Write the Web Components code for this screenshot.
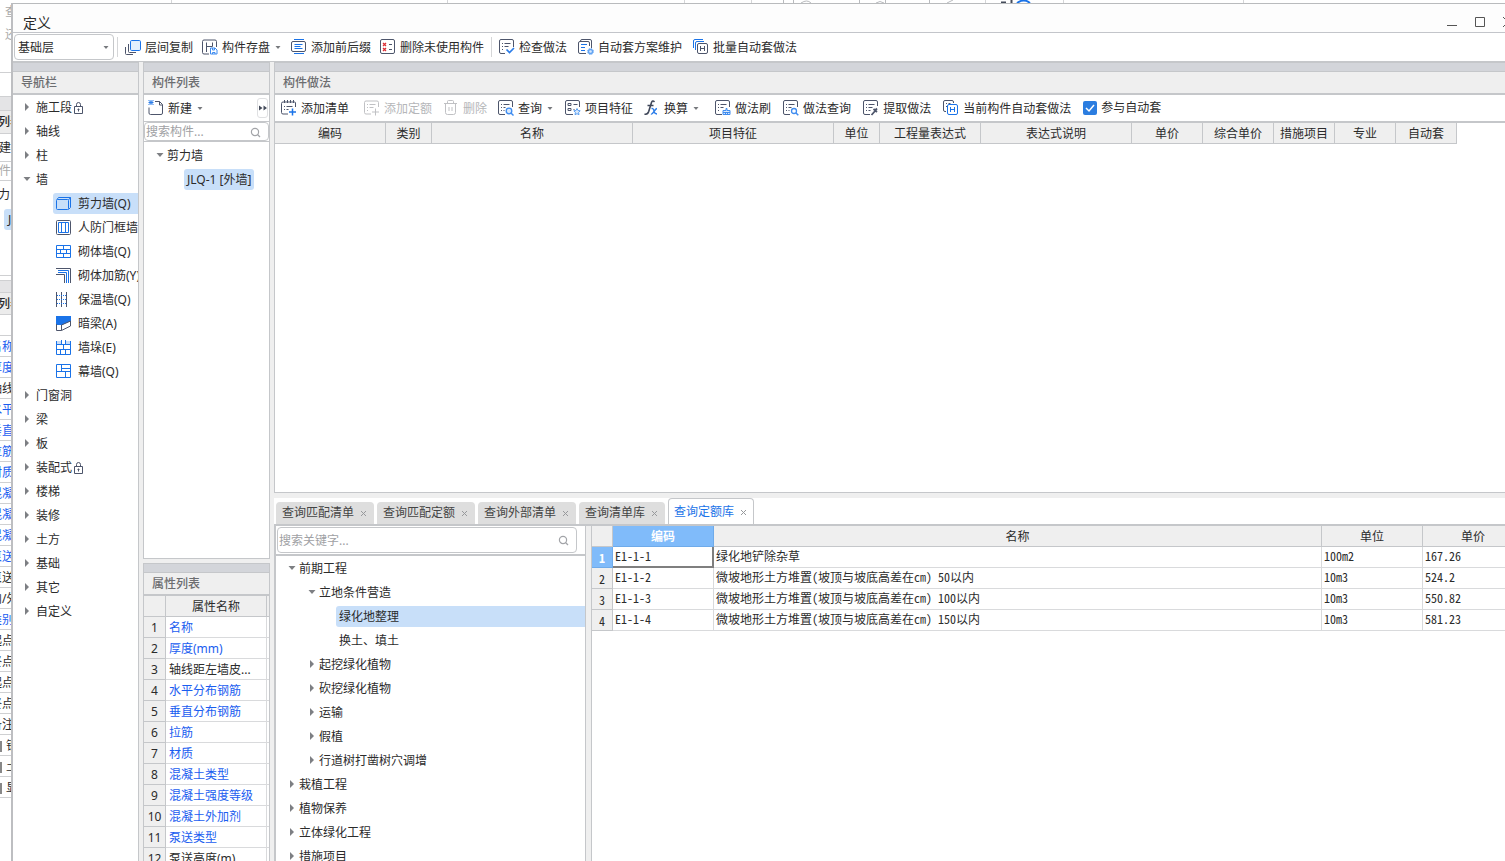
<!DOCTYPE html>
<html lang="zh-CN">
<head>
<meta charset="utf-8">
<title>定义</title>
<style>
  html, body { margin: 0; height: 100%; overflow: hidden; background: #fff; }
  body {
    font: 12px/20px "Noto Sans", "Noto Sans CJK SC", sans-serif;
    color: #2b2b2b;
    --line: #c5c7ca;
    --line-soft: #d9dadc;
    --panel: #efefef;
    --bar: #d3d5da;
    --sel: #c8dff9;
    --ink: #4d556b;
    --blue: #1a73e8;
  }
</style>
</head>
<body>
<define-app></define-app>
<script>
const ICONS = {
  copy: '<path class="k" d="M3.500 5v7.500q0 1 1 1H11M.5 8v6.500q0 1 1 1H8"/><rect class="b" x="5.500" y="1.500" width="10" height="10" rx="1.200" style="fill:#e3effd"/>',
  save: '<path class="k" d="M14.500 8V2.500q0-1.500-1.500-1.500H2Q.5 1 .5 2.500v11Q.5 15 2 15h5M4.500 3.500v9.500M4.500 7.500h6M10.500 3.500v4"/><path d="M8.500 9h4.500l2 2v4H8.500z" fill="#fff" stroke="#3f8cf0"/><path d="M10.500 9v2h2V9M10.500 15v-1.500h2.500V15" fill="none" stroke="#3f8cf0"/>',
  affix: '<path class="b" d="M3 .5h10M3 14.500h10M3.500 5.500h8M3.500 7.500h6M3.500 9.500h8"/><rect class="k" x=".5" y="2.500" width="14" height="10" rx="1.500"/>',
  unused: '<rect class="k" x=".5" y=".5" width="14" height="14" rx="1.500"/><path d="M3 4l3 3m0-3l-3 3M3 9l3 3m0-3l-3 3" stroke="#dc2f35" fill="none" stroke-width="1.300"/><path class="k" d="M9 5.500h3M9 10.500h3"/>',
  check: '<path class="k" d="M14.500 8V2q0-1.500-1.500-1.500H2Q.5.500.5 2v11Q.5 14.500 2 14.500h4M3 4.500h1M5.500 4.500h6M3 7.500h1M5.500 7.500h4M3 10.500h1"/><path d="M7.500 10.500l3 3 4.500-4.500" stroke="#2b7de9" fill="none" stroke-width="1.700"/>',
  scheme: '<path class="k" d="M2.500 2.500V2Q2.500.5 4 .5h8Q13.500.5 13.500 2v7M11.500 7V4q0-1.500-1.500-1.500H2Q.5 2.500.5 4v9Q.5 14.500 2 14.500h6"/><path class="b" d="M3 5.500h6M3 8.500h4M3 11.500h4"/><circle cx="12.500" cy="12.500" r="2" fill="#d9e9fc" stroke="#62a4f3" stroke-width="1.300"/><circle cx="12.500" cy="12.500" r="3" fill="none" stroke="#62a4f3" stroke-dasharray="1.300 1.050"/>',
  batch: '<path class="b" d="M.5 9V2Q.5.500 2 .5h8M2.500 11V4Q2.500 2.500 4 2.500h7"/><rect class="k" x="4.500" y="4.500" width="10" height="10" rx="1.500"/><path class="k" d="M7.500 7v5M11.500 7v5M7.500 9.500h4"/>',
  addlist: '<path class="k" d="M14.500 7V3q0-1-1-1H2Q.5 2 .5 3.500v9q0 1.500 1.500 1.500h5M3.500 0v3M6.500 0v3M9.500 0v3M12.500 0v3M3 6.500h1M5.500 6.500h6M3 9.500h1M5.500 9.500h2"/><path class="b" stroke-width="1.500" d="M11.500 8.500v7M8 12h7"/>',
  adddisabled: '<path class="g" d="M14.500 7V2.500q0-1.500-1.500-1.500H2Q.5 1 .5 2.500v10q0 1.500 1.500 1.500h5M3 4.500h1M5.500 4.500h6M3 7.500h1M5.500 7.500h4M3 10.500h1M11.500 8.500v7M8 12h7"/>',
  trash: '<path class="g" d="M1 3.500h13M4.500 3V1.500q0-1 1-1h4q1 0 1 1V3M2.500 4v8.500q0 2 2 2h6q2 0 2-2V4M6 7v4M9 7v4"/>',
  query: '<path class="k" d="M14.500 7V2q0-1.500-1.500-1.500H2Q.5.500.5 2v11Q.5 14.500 2 14.500h5M3 4.500h1M5.500 4.500h6M3 7.500h1M5.500 7.500h2M3 10.500h1M5.500 10.500h1"/><circle cx="11" cy="11" r="2.800" fill="#d9e9fc" stroke="#3f8cf0" stroke-width="1.300"/><path d="M13 13l2.500 2.500" stroke="#3f8cf0" stroke-width="1.500"/>',
  feature: '<path class="k" d="M14.500 7V2q0-1.500-1.500-1.500H2Q.5.500.5 2v11Q.5 14.500 2 14.500h6M3 3.500h3v2H3zM3 8.500h3v2H3zM8.500 4.500h4M8.500 9.500h1"/><path d="M12 8.500l1 2 2.200.3-1.600 1.600.4 2.300-2-1-2 1 .4-2.300-1.600-1.600 2.200-.3z" fill="#d9e9fc" stroke="#5a9ff2"/>',
  fx: '<path d="M10.500 1.800Q8.500 0 7.500 2.500L4.700 11.500Q3.500 15 .5 14M3.500 5.500h6" fill="none" stroke="#3f4658" stroke-width="1.600"/><path d="M7.500 8.500q2-.5 2.500 2.500t3 3M13 8.500q-1 0-3 3t-3 2.500" fill="none" stroke="#2b7de9" stroke-width="1.400"/>',
  brush: '<path class="k" d="M14.500 7V2Q14.500.5 13 .5H2Q.5.500.5 2v11Q.5 14.500 2 14.500h5M3 4.500h1M5.500 4.500h6M3 7.500h1M5.500 7.500h3M3 10.500h1"/><path d="M11 8.500h1v2h3v4H8v-4h3zM8 12.500h7M10.500 12.500v2M12.500 12.500v2" fill="#d9e9fc" stroke="#3f8cf0"/>',
  find: '<path class="k" d="M14.500 7V2Q14.500.5 13 .5H2Q.5.500.5 2v11Q.5 14.500 2 14.500h5M3 4.500h1M5.500 4.500h6M3 7.500h1M5.500 7.500h3M3 10.500h1M5.500 10.500h1"/><circle cx="11" cy="11" r="2.500" fill="#fff" stroke="#3f8cf0" stroke-width="1.300"/><path d="M12.800 12.800l2.500 2.500" stroke="#3f8cf0" stroke-width="1.500"/>',
  extract: '<path class="k" d="M14.500 6V2Q14.500.5 13 .5H2Q.5.500.5 2v11Q.5 14.500 2 14.500h5M3 4.500h1M5.500 4.500h6M3 7.500h1M5.500 7.500h4M3 10.500h1M5.500 10.500h2"/><path d="M8.500 15l4-4.500M10.500 9l3.500 3M12 10.500l2-2" stroke="#4d556b" stroke-width="1.800" fill="none"/>',
  auto: '<path class="k" d="M3 11.500H2Q.5 11.500.5 10V2Q.5.500 2 .5h7q1.500 0 1.500 1.500v1M3 3.500h1M5.500 3.500h2M3 6.500h1"/><rect class="b" x="4.500" y="4.500" width="10" height="10" rx="1.500"/><path class="b" d="M7.500 7v5M11.500 7v5M7.500 9.500h4"/>',
  newdoc: '<path class="k" d="M7 1.500h4.500l3 3v8.500q0 1.500-1.500 1.500H2.500Q1 14.500 1 13V7.500M11.500 1.500v3.500h3"/><path d="M.5 0l5 5m0-5l-5 5M3 0v5M.5 2.500h5" stroke="#2b7de9" fill="none" stroke-width="1"/>',
  shear: '<rect class="b" x=".5" y="3.500" width="12" height="10" rx="1"/><path class="b" d="M1 3.500l1.500-2h12v10l-2 2M12.500 4l2-2.500"/>',
  civil: '<rect class="k" x=".5" y=".5" width="14" height="14" rx="1"/><path class="b" d="M2.500 2.500h10v10h-10zM5.500 2.500v10M9.500 2.500v10"/>',
  brick: '<path class="b" d="M.5 1.500h14v12H.5zM.5 5.500h14M.5 9.500h14M7.500 1.500v4M4.500 5.500v4M10.500 5.500v4M7.500 9.500v4"/>',
  rebar: '<path class="k" d="M0 .5h14.500V15M0 6.500h8.500V15"/><path class="b" d="M2 2.500h10.500V15M2 4.500h8.500V15"/>',
  insul: '<path class="k" d="M.5 0v15M5.500 0v15M10.500 0v15"/><path class="b" stroke-dasharray="1 1" d="M1 3.500h9M1 7.500h9M1 11.500h9"/>',
  hidden: '<path d="M0 0h15v5L6 9H0z" fill="#1a73e8"/><path class="k" d="M.5 8v6.500h5V9M5.500 14.500L14.500 10V5l-9 4"/>',
  pier: '<path d="M1 1h4v3H1zM10 1h4v3h-4z" fill="#c9def9"/><path class="b" d="M.5 1v13.500h14V1M5.500 0v4.500M9.500 0v4.500M.5 4.500h14M.5 9.500h14M7.500 4.500v5M4.500 9.500v5M9.500 9.500v5"/>',
  curtain: '<path class="b" d="M.5.500h14v13H.5zM.5 7.500h14M5.500.5v7M9.500 7.500v6M5.500 4.500h9"/>',
  lock: '<path class="k" d="M2.500 6.500h8v7h-8zM4.500 6V4.500q0-2 2-2t2 2V6"/><path class="k" d="M6.500 8.500v3M5.500 9.500h2"/>',
  search: '<circle cx="7" cy="8" r="3.600" fill="none" stroke="#a2a4a8" stroke-width="1.200"/><path d="M9.500 10.500l2.500 2.500" stroke="#a2a4a8" stroke-width="1.200"/>',
  more: '<path d="M4 5.500l3.500 2.500L4 10.500zM8.500 5.500l3.500 2.500-3.500 2.500z" fill="#444b5a"/>',
  min: '<path d="M3 12.500h10" stroke="#555"/>',
  max: '<path d="M3.500 4.500h9v9h-9z" fill="none" stroke="#555"/>',
  close: '<path d="M3 4l10 10M13 4L3 14" stroke="#555"/>',
  drop: '<path d="M5.500 7h5l-2.500 3z" fill="#77797d"/>',
  x: '<path d="M5 6l5 5m0-5l-5 5" stroke="#97999c"/>',
  open: '<path d="M4.500 6h7L8 10z" fill="#7d7f83"/>',
  shut: '<path d="M6 4l4 4-4 4z" fill="#7d7f83"/>'
};

class Base extends HTMLElement {
  connectedCallback() {
    if (this.shadowRoot) return;
    this.attachShadow({ mode: 'open' });
    const t = document.createElement('template');
    t.innerHTML = `<style>*{box-sizing:border-box}${this.css()}</style>${this.html()}`;
    this.shadowRoot.append(t.content.cloneNode(true));
  }
  get(n) { return this.getAttribute(n) || ''; }
}
const def = (name, css, html) => customElements.define(name, class extends Base {
  css() { return css; }
  html() { return typeof html === 'function' ? html(this) : html; }
});
const icon = (n, extra = '') => `<ui-icon name="${n}" ${extra}></ui-icon>`;

def('ui-icon', `
  :host { display: block; flex: none; width: 16px; height: 16px; }
  svg { display: block; }
  .k { fill: none; stroke: #4d556b; } .b { fill: none; stroke: #1a73e8; } .g { fill: none; stroke: #c0c1c4; }`,
  e => `<svg width="16" height="16" viewBox="0 0 16 16" aria-hidden="true">${ICONS[e.get('name')]}</svg>`);

def('tool-button', `
  :host { display: block; flex: none; }
  button { display: flex; align-items: center; gap: 4px; height: 20px; padding: 0; border: 0; background: none; font: inherit; color: inherit; white-space: nowrap; }
  button:disabled { color: #b5b6b9; }
  .label { padding-top: 2px; }
  .drop { width: 8px; overflow: hidden; display: flex; justify-content: center; }`,
  e => `<button type="button" ${e.hasAttribute('disabled') ? 'disabled' : ''}>${icon(e.get('icon'))}<span class="label"><slot></slot></span>${e.hasAttribute('drop') ? `<span class="drop">${icon('drop')}</span>` : ''}</button>`);

def('search-box', `
  :host { display: block; min-width: 0; }
  label { display: flex; align-items: center; height: 100%; border: 1px solid var(--line); border-radius: 4px; background: #fff; padding: 0 4px 0 1px; }
  input { flex: 1; min-width: 0; border: 0; outline: 0; padding: 1px 0 0; background: none; font: inherit; line-height: 16px; color: inherit; }
  input::placeholder { color: #a0a1a4; opacity: 1; }`,
  e => `<label><input type="text" aria-label="搜索" placeholder="${e.get('hint')}">${icon('search')}</label>`);

def('dock-pane', `
  :host { display: flex; flex-direction: column; min-width: 0; min-height: 0; overflow: hidden; background: #fff; border-top: 1px solid var(--line); }
  .grip { flex: none; height: 9px; background: var(--bar); border-bottom: 1px solid var(--line); }
  h2 { flex: none; margin: 0; height: 23px; padding-left: 8px; background: var(--panel); border-bottom: 2px solid var(--line); font-size: 12px; line-height: 22px; font-weight: 500; color: #6c6d70; }
  .body { flex: 1; min-height: 0; display: flex; flex-direction: column; overflow: hidden; }`,
  e => `<div class="grip"></div><h2>${e.get('heading')}</h2><div class="body"><slot></slot></div>`);

def('tree-row', `
  :host { display: flex; flex: none; height: 24px; padding-top: 2px; padding-left: calc(var(--tree-pad) + var(--level) * 20px); }
  .arrow { flex: none; width: 8px; height: 20px; margin-right: var(--tree-gap, 0px); display: flex; justify-content: center; align-items: center; }
  .content { display: flex; align-items: center; gap: 6px; height: 21px; padding: 0 3px; line-height: 21px; white-space: nowrap; border-radius: 3px; }
  :host([lock]) .content { gap: 0; }
  :host([selected]) .content { background: var(--sel); }
  :host([fill]) .content { flex: 1; border-radius: 3px 0 0 3px; }`,
  e => `<span class="arrow">${e.get('state') ? icon(e.get('state')) : ''}</span><span class="content" role="treeitem">${e.get('icon') ? icon(e.get('icon')) : ''}<span><slot></slot></span>${e.hasAttribute('lock') ? icon('lock') : ''}</span>`);

const rows = list => list.map(([label, level, state, extra = '']) =>
  `<tree-row style="--level:${level}" ${state ? `state="${state}"` : ''} ${extra}>${label}</tree-row>`).join('');

def('nav-tree', `
  :host { display: flex; flex-direction: column; flex: 1; overflow: hidden; --tree-pad: 10px; --tree-gap: 2px; }`,
  rows([
    ['施工段', 0, 'shut', 'lock'], ['轴线', 0, 'shut'], ['柱', 0, 'shut'], ['墙', 0, 'open'],
    ['剪力墙(Q)', 1, '', 'icon="shear" selected fill'], ['人防门框墙', 1, '', 'icon="civil"'],
    ['砌体墙(Q)', 1, '', 'icon="brick"'], ['砌体加筋(Y)', 1, '', 'icon="rebar"'],
    ['保温墙(Q)', 1, '', 'icon="insul"'], ['暗梁(A)', 1, '', 'icon="hidden"'],
    ['墙垛(E)', 1, '', 'icon="pier"'], ['幕墙(Q)', 1, '', 'icon="curtain"'],
    ['门窗洞', 0, 'shut'], ['梁', 0, 'shut'], ['板', 0, 'shut'], ['装配式', 0, 'shut', 'lock'],
    ['楼梯', 0, 'shut'], ['装修', 0, 'shut'], ['土方', 0, 'shut'], ['基础', 0, 'shut'],
    ['其它', 0, 'shut'], ['自定义', 0, 'shut']]));

def('component-list', `
  :host { display: flex; flex-direction: column; flex: 1; min-height: 0; }
  .tools { flex: none; display: flex; align-items: center; justify-content: space-between; height: 27px; padding: 0 1px 0 4px; border-bottom: 1px solid var(--line); }
  .more { width: 11px; height: 20px; padding: 0; border: 1px solid #dfe0e2; border-radius: 3px; background: #fff; display: flex; align-items: center; justify-content: center; overflow: hidden; }
  search-box { flex: none; height: 19px; }
  .tree { flex: 1; padding-top: 1px; border-top: 1px solid var(--line); border-bottom: 1px solid var(--line); --tree-pad: 12px; overflow: hidden; }`,
  `<div class="tools"><tool-button icon="newdoc" drop>新建</tool-button><button class="more" type="button" aria-label="更多">${icon('more')}</button></div>
   <search-box hint="搜索构件..."></search-box>
   <div class="tree" role="tree">${rows([['剪力墙', 0, 'open'], ['JLQ-1 [外墙]', 1, '', 'selected']])}</div>`);

const PROPS = [['名称', 1], ['厚度(mm)', 1], ['轴线距左墙皮...', 0], ['水平分布钢筋', 1], ['垂直分布钢筋', 1], ['拉筋', 1], ['材质', 1],
  ['混凝土类型', 1], ['混凝土强度等级', 1], ['混凝土外加剂', 1], ['泵送类型', 1], ['泵送高度(m)', 0]];
def('property-table', `
  :host { display: block; }
  table { width: 100%; table-layout: fixed; border-collapse: separate; border-spacing: 0; }
  th, td { height: 21px; padding: 2px 0 0 3px; border-right: 1px solid var(--line-soft); border-bottom: 1px solid var(--line-soft); font-weight: 400; text-align: left; line-height: 18px; white-space: nowrap; overflow: hidden; }
  th { background: var(--panel); border-color: var(--line); text-align: center; padding-left: 0; }
  th:last-child, td:last-child { border-right: 0; }
  .b { color: #1a5df0; }`,
  `<table><colgroup><col style="width:22px"><col style="width:101px"><col></colgroup>
   <thead><tr><th></th><th>属性名称</th><th></th></tr></thead>
   <tbody>${PROPS.map(([t, b], i) => `<tr><th>${i + 1}</th><td class="${b ? 'b' : ''}">${t}</td><td></td></tr>`).join('')}</tbody></table>`);

const COLS = [['编码', 111], ['类别', 46], ['名称', 201], ['项目特征', 201], ['单位', 46], ['工程量表达式', 101], ['表达式说明', 151], ['单价', 71], ['综合单价', 71], ['措施项目', 61], ['专业', 61], ['自动套', 61]];
def('method-pane', `
  :host { display: flex; flex-direction: column; flex: 1; min-height: 0; overflow: hidden; }
  .tools { flex: none; display: flex; align-items: center; gap: 15px; height: 28px; padding-left: 6px; border-bottom: 2px solid var(--line); }
  .group { display: flex; align-items: center; gap: 11px; }
  .wide { gap: 12px; }
  .auto { display: flex; align-items: center; gap: 4px; height: 20px; white-space: nowrap; }
  .auto input { appearance: none; width: 14px; height: 14px; margin: 0; border-radius: 2px; background: #2b7de0 url("data:image/svg+xml,%3Csvg xmlns='http://www.w3.org/2000/svg' viewBox='0 0 14 14'%3E%3Cpath d='M3 7l3 3 5-6' fill='none' stroke='white' stroke-width='1.500'/%3E%3C/svg%3E"); }
  table { flex: none; align-self: flex-start; table-layout: fixed; width: 1182px; border-collapse: separate; border-spacing: 0; }
  th { height: 21px; padding: 2px 0 0; background: var(--panel); border-right: 1px solid var(--line); border-bottom: 1px solid var(--line); font-weight: 400; line-height: 18px; white-space: nowrap; }`,
  `<div class="tools">
    <div class="group"><tool-button icon="addlist">添加清单</tool-button></div>
    <div class="group"><tool-button icon="adddisabled" disabled>添加定额</tool-button><tool-button icon="trash" disabled>删除</tool-button><tool-button icon="query" drop>查询</tool-button><tool-button icon="feature">项目特征</tool-button><tool-button icon="fx" drop>换算</tool-button></div>
    <div class="group wide"><tool-button icon="brush">做法刷</tool-button><tool-button icon="find">做法查询</tool-button><tool-button icon="extract">提取做法</tool-button><tool-button icon="auto">当前构件自动套做法</tool-button><label class="auto"><input type="checkbox" checked>参与自动套</label></div>
   </div>
   <table><colgroup>${COLS.map(c => `<col style="width:${c[1]}px">`).join('')}</colgroup><thead><tr>${COLS.map(c => `<th>${c[0]}</th>`).join('')}</tr></thead></table>`);

def('query-tab', `
  :host { display: block; flex: none; }
  button { display: flex; align-items: center; gap: 2px; height: 22px; padding: 0 2px 0 6px; border: 0; border-radius: 4px 4px 0 0; background: #dedede; color: #444; font: inherit; white-space: nowrap; }
  :host([active]) button { height: 26px; background: #fff; color: var(--blue); border: 1px solid var(--line); border-bottom: 0; padding: 0 1px 0 5px; }`,
  `<button type="button" role="tab"><span><slot></slot></span>${icon('x')}</button>`);

const DATA = [['E1-1-1', '绿化地铲除杂草', '100m2', '167.26'],
  ['E1-1-2', '微坡地形土方堆置(坡顶与坡底高差在㎝) 50以内', '10m3', '524.2'],
  ['E1-1-3', '微坡地形土方堆置(坡顶与坡底高差在㎝) 100以内', '10m3', '550.82'],
  ['E1-1-4', '微坡地形土方堆置(坡顶与坡底高差在㎝) 150以内', '10m3', '581.23']];
def('quota-table', `
  :host { display: block; min-width: 0; overflow: hidden; background: #fff; border-left: 1px solid var(--line); }
  table { width: calc(100% + 19px); table-layout: fixed; border-collapse: separate; border-spacing: 0; }
  th, td { height: 21px; padding: 0 0 0 2px; border-right: 1px solid var(--line-soft); border-bottom: 1px solid var(--line-soft); text-align: left; white-space: nowrap; overflow: hidden; line-height: 18px; }
  td { font-family: "Noto Sans Mono CJK SC", "Noto Sans CJK SC", monospace; padding-bottom: 2px; }
  th { background: var(--panel); border-color: var(--line); text-align: center; font-weight: 400; padding: 2px 0 0; }
  tbody th { font-family: "Noto Sans Mono CJK SC", "Noto Sans CJK SC", monospace; }
  th.on { background: #80bbfa; color: #fff; font-weight: 700; border-color: #6fabea; }
  td.cur { border-right: 2px solid #7f7f7f; border-bottom: 2px solid #7f7f7f; padding-bottom: 1px; }`,
  `<table><colgroup><col style="width:21px"><col style="width:101px"><col><col style="width:101px"><col style="width:101px"></colgroup>
   <thead><tr><th></th><th class="on">编码</th><th>名称</th><th>单位</th><th>单价</th></tr></thead>
   <tbody>${DATA.map((r, i) => `<tr><th class="${i ? '' : 'on'}">${i + 1}</th>${r.map((c, j) => `<td class="${i + j ? '' : 'cur'}">${c}</td>`).join('')}</tr>`).join('')}</tbody></table>`);

def('query-pane', `
  :host { display: flex; flex-direction: column; min-width: 0; min-height: 0; overflow: hidden; background: #fff; }
  .tabs { flex: none; display: flex; align-items: flex-end; gap: 3px; height: 26px; padding-left: 2px; }
  .split { flex: 1; min-height: 0; display: grid; grid-template-columns: 312px minmax(0, 1fr); column-gap: 5px; background: var(--panel); border-top: 2px solid var(--line); }
  .left { display: flex; flex-direction: column; min-height: 0; background: #fff; border-left: 2px solid var(--line); border-right: 1px solid var(--line); overflow: hidden; }
  .find { flex: none; height: 30px; padding: 1px 8px 1px 1px; border-bottom: 2px solid var(--line); }
  search-box { height: 26px; }
  .tree { flex: 1; min-height: 0; overflow: hidden; --tree-pad: 12px; }`,
  `<div class="tabs" role="tablist"><query-tab>查询匹配清单</query-tab><query-tab>查询匹配定额</query-tab><query-tab>查询外部清单</query-tab><query-tab>查询清单库</query-tab><query-tab active>查询定额库</query-tab></div>
   <div class="split"><div class="left"><div class="find"><search-box hint="搜索关键字..."></search-box></div>
   <div class="tree" role="tree">${rows([['前期工程', 0, 'open'], ['立地条件营造', 1, 'open'], ['绿化地整理', 2, '', 'selected fill'], ['换土、填土', 2, ''],
     ['起挖绿化植物', 1, 'shut'], ['砍挖绿化植物', 1, 'shut'], ['运输', 1, 'shut'], ['假植', 1, 'shut'], ['行道树打凿树穴调增', 1, 'shut'],
     ['栽植工程', 0, 'shut'], ['植物保养', 0, 'shut'], ['立体绿化工程', 0, 'shut'], ['措施项目', 0, 'shut']])}</div></div>
   <quota-table></quota-table></div>`);

def('main-toolbar', `
  :host { display: flex; align-items: center; flex: none; height: 29px; padding-left: 1px; background: #fff; border-bottom: 1px solid var(--line); }
  .pick { position: relative; display: block; flex: none; }
  select { appearance: none; display: block; width: 100px; height: 26px; padding: 1px 18px 0 3px; border: 1px solid var(--line); border-radius: 4px; background: #fff; font: inherit; color: inherit; }
  .pick ui-icon { position: absolute; right: 0; top: 5px; pointer-events: none; }
  .sep { flex: none; width: 1px; height: 20px; margin: 0 7px 0 3px; background: #d5d6d8; }
  .group + .sep { margin-left: 7px; }
  .group { display: flex; gap: 9px; }
  .wide { gap: 11px; }`,
  `<label class="pick"><select aria-label="楼层"><option>基础层</option></select>${icon('drop')}</label><span class="sep"></span>
   <div class="group"><tool-button icon="copy">层间复制</tool-button><tool-button icon="save" drop>构件存盘</tool-button><tool-button icon="affix">添加前后缀</tool-button><tool-button icon="unused">删除未使用构件</tool-button></div>
   <span class="sep"></span>
   <div class="group wide"><tool-button icon="check">检查做法</tool-button><tool-button icon="scheme">自动套方案维护</tool-button><tool-button icon="batch">批量自动套做法</tool-button></div>`);

def('title-bar', `
  :host { display: flex; justify-content: space-between; flex: none; height: 29px; padding-left: 10px; background: #fdfdfd; border-bottom: 1px solid #c3c5ca; overflow: hidden; }
  h1 { margin: 0; padding-top: 8px; font-size: 14px; line-height: 22px; font-weight: 400; }
  .win { display: flex; gap: 12px; padding-top: 9px; margin-right: -11px; }
  button { padding: 0; border: 0; width: 16px; height: 16px; background: none; }`,
  `<h1>定义</h1><div class="win">${['min', 'max', 'close'].map(n => `<button type="button" aria-label="${n}">${icon(n)}</button>`).join('')}</div>`);

const UNDER = ['名称', '厚度', '轴线', '水平', '垂直', '拉筋', '材质', '混凝', '混凝', '混凝', '泵送', '泵送', '内/外', '类别', '起点', '终点', '起点', '终点', '备注'];
def('under-window', `
  :host { display: block; overflow: hidden; background: #fff; }
  div { overflow: hidden; white-space: nowrap; line-height: 20px; height: var(--h); border-bottom: 1px solid #cfd0d2; display: flex; align-items: center; }
  .n { border-bottom: 0; } .g { background: #e4e4e6; } .p { background: #ececec; font-weight: 500; }
  .soft { color: #aaa; } .b { color: #1a5df0; }
  .row { --h: 21px; padding-top: 2px; }
  span { display: block; margin-left: -13px; }
  .row span { margin-left: -10px; }
  .near span { margin-left: -2px; }
  .far span { margin-left: 5px; }
  .sel { margin-left: 4px; padding-left: 4px; background: var(--sel); border-radius: 3px 0 0 3px; }
  .sel span { margin-left: 0; }
  .box { width: 2px; height: 11px; background: #888; margin-right: 4px; flex: none; }
  .sub span { margin-left: 0; }`,
  `<div class="n soft far" style="--h:24px"><span>查</span></div><div class="n soft far" style="--h:22px"><span>还</span></div><div style="--h:27px"></div>
   <div style="--h:24px"></div><div class="g" style="--h:14px"></div><div class="p near" style="--h:23px"><span>列表</span></div>
   <div style="--h:28px"><span>新建</span></div><div class="soft" style="--h:19px"><span>构件</span></div>
   <div class="n near" style="--h:28px"><span>力</span></div><div class="n sel" style="--h:21px"><span>J</span></div><div style="--h:46px"></div>
   <div style="--h:5px"></div><div class="g" style="--h:12px"></div><div class="p near" style="--h:22px"><span>列表</span></div><div style="--h:21px"></div>
   ${UNDER.map((t, i) => `<div class="row ${[2, 11, 12, 14, 15, 16, 17, 18].includes(i) ? '' : 'b'}"><span>${t}</span></div>`).join('')}
   ${['钢', '土', '显'].map(t => `<div class="row sub"><i class="box"></i><span>${t}</span></div>`).join('')}`);

def('under-edge', `
  :host { display: block; height: 3px; background: #fff; overflow: hidden; }
  svg { display: block; }`,
  `<svg width="1494" height="3" aria-hidden="true"><path d="M160.500 0v3M436.500 0v3M673.500 0v3M740.500 0v3M974.500 0v3M1052.500 0v3M1232.500 0v3" stroke="#d5d6d8"/>
   <path d="M772.500 0v3M782.500 0v3M790 3q6-4 10 0M848.500 0v3M865 3q4-3 8 0M874.500 0v3M918.500 0v3M936 3l6-3" stroke="#b9bbbe" fill="none"/>
   <path d="M990 2.500h5M1000.500 0v3" stroke="#444b5a" stroke-width="2"/><path d="M1006 3q7-5 13 0" fill="none" stroke="#1a73e8" stroke-width="2"/></svg>`);

def('define-dialog', `
  :host { display: flex; flex-direction: column; min-width: 0; min-height: 0; border-top: 1px solid #b9bbbd; border-left: 2px solid #bdbec1; background: var(--panel); overflow: hidden; }
  .work { flex: 1; min-height: 0; display: grid; grid-template-columns: 126px 127px minmax(0, 1fr); column-gap: 4px; }
  .col { display: grid; min-width: 0; min-height: 0; }
  .mid { grid-template-rows: minmax(0, 497fr) minmax(0, 298fr); row-gap: 4px; }
  .main { grid-template-rows: minmax(0, 431fr) minmax(0, 363fr); row-gap: 5px; }
  .nav { border-right: 1px solid var(--line); }
  .mid > * { border-left: 1px solid var(--line); border-right: 1px solid var(--line); }
  .main > dock-pane { border-left: 1px solid var(--line); border-bottom: 1px solid var(--line); }`,
  `<title-bar></title-bar><main-toolbar></main-toolbar>
   <div class="work">
     <dock-pane class="nav" heading="导航栏"><nav-tree role="tree"></nav-tree></dock-pane>
     <div class="col mid"><dock-pane heading="构件列表"><component-list></component-list></dock-pane><dock-pane heading="属性列表"><property-table></property-table></dock-pane></div>
     <div class="col main"><dock-pane heading="构件做法"><method-pane></method-pane></dock-pane><query-pane></query-pane></div>
   </div>`);

def('define-app', `
  :host { display: grid; grid-template-columns: 11px minmax(0, 1fr); height: 100vh; overflow: hidden; }
  .front { display: grid; grid-template-rows: 3px minmax(0, 1fr); min-width: 0; min-height: 0; }`,
  `<under-window></under-window><div class="front"><under-edge></under-edge><define-dialog></define-dialog></div>`);
</script>
</body>
</html>
